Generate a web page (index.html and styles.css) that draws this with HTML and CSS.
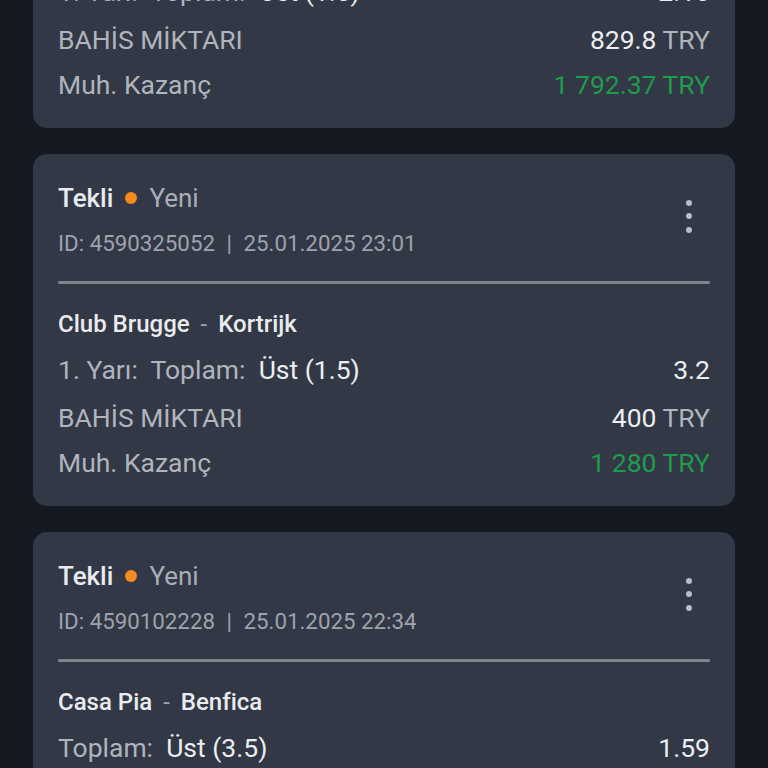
FILE: index.html
```html
<!DOCTYPE html>
<html lang="tr">

<head>
    <meta charset="UTF-8">
    <meta name="viewport" content="width=device-width, initial-scale=1.0">
    <title>Kuponlar</title>
    <link rel="stylesheet" href="styles.css">
</head>

<body>

    <div class="list">

        <div class="card">
            <div class="head">
                <div class="info">
                    <p class="type">Tekli <span class="dot"></span> <span class="state">Yeni</span></p>
                    <p class="id">ID: 4590412907 <span class="sep">|</span> 25.01.2025 23:40</p>
                </div>
                <div class="more"><span></span><span></span><span></span></div>
            </div>
            <div class="line"></div>
            <p class="match">Club Brugge <span class="dash">-</span> Kortrijk</p>
            <div class="row pick">
                <span class="label">1. Yarı:&nbsp; Toplam:&nbsp; <b>Üst (1.5)</b></span>
                <span class="val">2.16</span>
            </div>
            <div class="row stake">
                <span class="label">BAHİS MİKTARI</span>
                <span class="val">829.8 <i>TRY</i></span>
            </div>
            <div class="row gain">
                <span class="label">Muh. Kazanç</span>
                <span class="win">1 792.37 TRY</span>
            </div>
        </div>

        <div class="card">
            <div class="head">
                <div class="info">
                    <p class="type">Tekli <span class="dot"></span> <span class="state">Yeni</span></p>
                    <p class="id">ID: 4590325052 <span class="sep">|</span> 25.01.2025 23:01</p>
                </div>
                <div class="more"><span></span><span></span><span></span></div>
            </div>
            <div class="line"></div>
            <p class="match">Club Brugge <span class="dash">-</span> Kortrijk</p>
            <div class="row pick">
                <span class="label">1. Yarı:&nbsp; Toplam:&nbsp; <b>Üst (1.5)</b></span>
                <span class="val">3.2</span>
            </div>
            <div class="row stake">
                <span class="label">BAHİS MİKTARI</span>
                <span class="val">400 <i>TRY</i></span>
            </div>
            <div class="row gain">
                <span class="label">Muh. Kazanç</span>
                <span class="win">1 280 TRY</span>
            </div>
        </div>

        <div class="card">
            <div class="head">
                <div class="info">
                    <p class="type">Tekli <span class="dot"></span> <span class="state">Yeni</span></p>
                    <p class="id">ID: 4590102228 <span class="sep">|</span> 25.01.2025 22:34</p>
                </div>
                <div class="more"><span></span><span></span><span></span></div>
            </div>
            <div class="line"></div>
            <p class="match">Casa Pia <span class="dash">-</span> Benfica</p>
            <div class="row pick">
                <span class="label">Toplam:&nbsp; <b>Üst (3.5)</b></span>
                <span class="val">1.59</span>
            </div>
            <div class="row stake">
                <span class="label">BAHİS MİKTARI</span>
                <span class="val">250 <i>TRY</i></span>
            </div>
            <div class="row gain">
                <span class="label">Muh. Kazanç</span>
                <span class="win">397.5 TRY</span>
            </div>
        </div>

    </div>

</body>

</html>
```

FILE: styles.css
```css
*{
    margin: 0;
    padding: 0;
    box-sizing: border-box;
}
body{
    background: #141922;
    font-family: Roboto, "Liberation Sans", sans-serif;
    overflow: hidden;
    height: 768px;
}
.list{
    display: flex;
    flex-direction: column;
    gap: 26px;
    padding: 0 33px;
    margin-top: -224px;
}
.card{
    background: #323845;
    border-radius: 14px;
    padding: 25px 25px 25px;
}
.head{
    display: flex;
    justify-content: space-between;
    align-items: center;
}
.type{
    font-size: 26px;
    font-weight: 500;
    color: #e9ebef;
    line-height: 38px;
    display: flex;
    align-items: center;
    gap: 12px;
}
.dot{
    width: 12px;
    height: 12px;
    border-radius: 50%;
    background: #f7891f;
}
.state{
    color: #a9aeb7;
    font-weight: 400;
}
.id{
    font-size: 22.3px;
    color: #9ea3ad;
    line-height: 32px;
    margin-top: 10px;
}
.sep{
    margin: 0 6px;
}
.more{
    display: flex;
    flex-direction: column;
    gap: 7.5px;
    margin-right: 18px;
    margin-top: -6px;
}
.more span{
    width: 6px;
    height: 6px;
    border-radius: 50%;
    background: #b9bdc5;
}
.line{
    height: 3px;
    border-radius: 2px;
    background: #7f848e;
    margin-top: 22px;
}
.match{
    font-size: 24px;
    font-weight: 500;
    color: #e9ebef;
    line-height: 34px;
    margin-top: 23px;
}
.dash{
    color: #9ea3ad;
    font-weight: 400;
    margin: 0 5px;
}
.row{
    display: flex;
    justify-content: space-between;
    align-items: center;
    font-size: 26.5px;
    line-height: 36px;
}
.pick{
    margin-top: 11px;
}
.stake{
    margin-top: 12px;
}
.gain{
    margin-top: 9px;
}
.label{
    color: #b0b5bd;
}
.label b{
    font-weight: 400;
    color: #eceef1;
}
.val{
    color: #eceef1;
}
.val i{
    font-style: normal;
    color: #b0b5bd;
}
.win{
    color: #1f9b4c;
}
```
